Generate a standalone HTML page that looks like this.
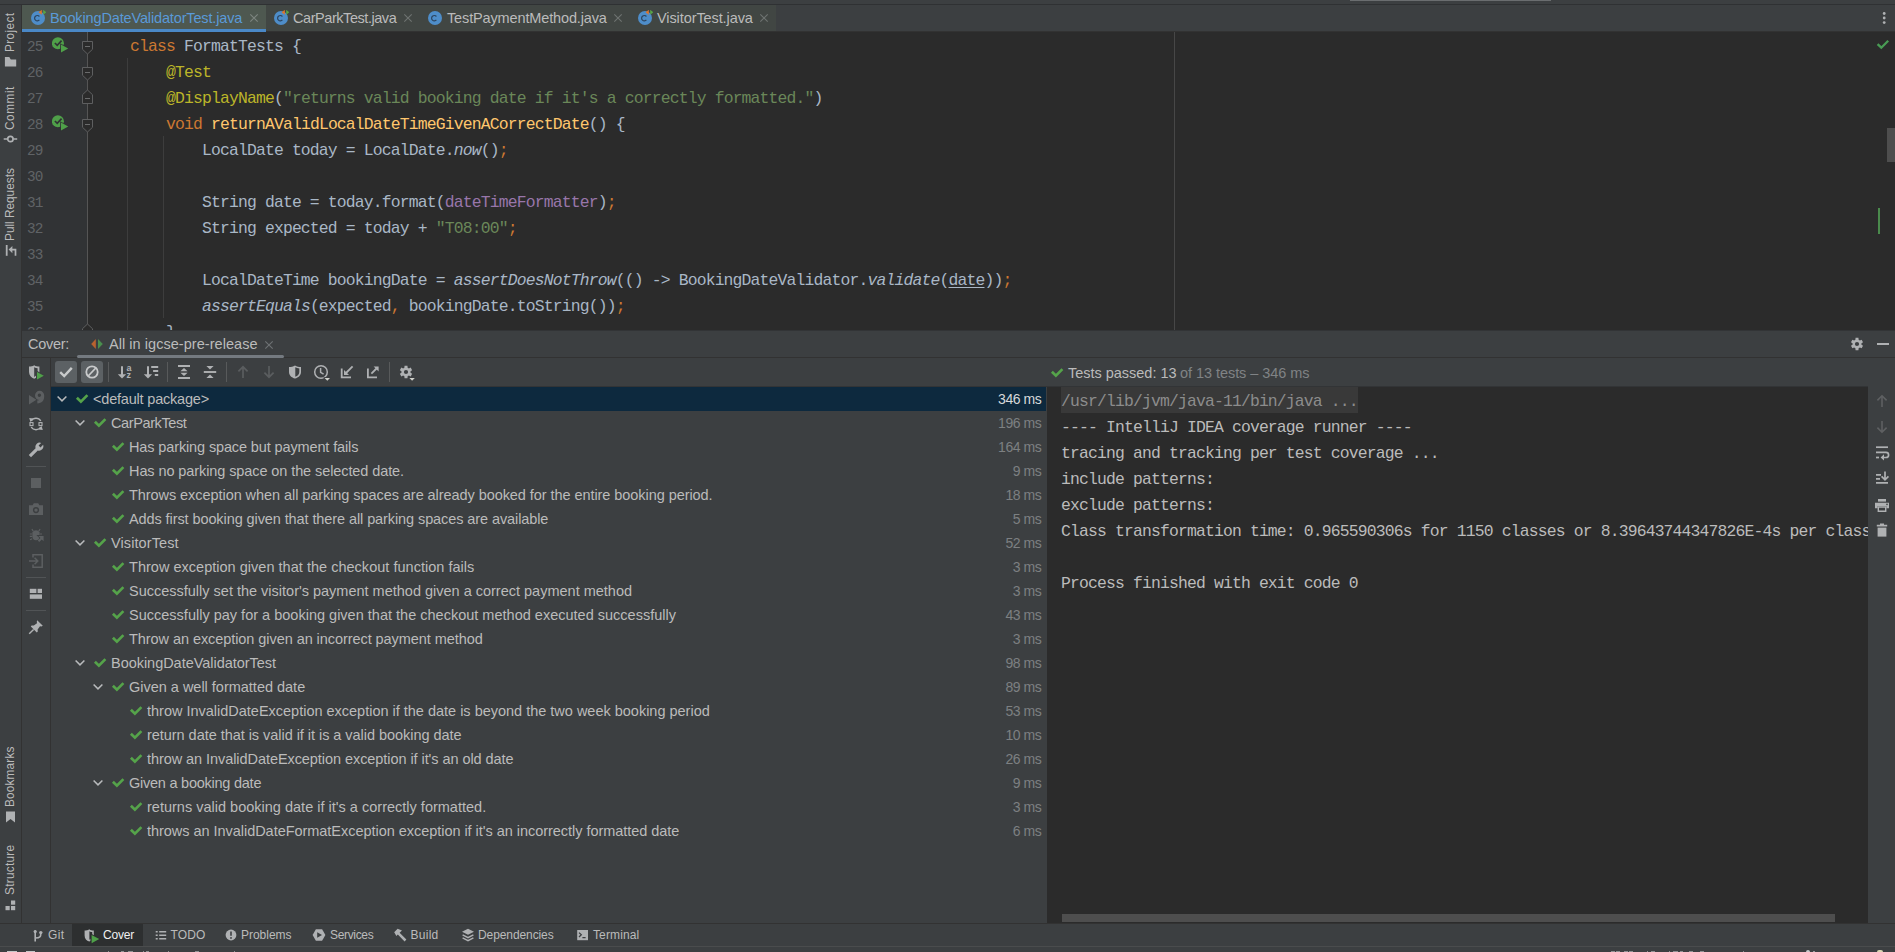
<!DOCTYPE html>
<html><head><meta charset="utf-8"><title>IDE</title>
<style>
html,body{margin:0;padding:0;}
body{width:1895px;height:952px;overflow:hidden;background:#3c3f41;position:relative;
 font-family:"Liberation Sans",sans-serif;font-size:13px;color:#bbbbbb;}
div,span,svg{position:absolute;box-sizing:border-box;}
.t{white-space:pre;font-family:"Liberation Sans",sans-serif;}
.m{white-space:pre;font-family:"Liberation Mono",monospace;}
.code{left:94px;height:26px;line-height:26px;font-size:16.4px;letter-spacing:-0.8416px;color:#a9b7c6;}
.code span,.con span{position:static;}
.k{color:#cc7832}.a{color:#bbb529}.s{color:#6a8759}.f{color:#ffc66d}.p{color:#9876aa}.i{font-style:italic}
.u{text-decoration:underline;text-underline-offset:2px}
.ln{left:22px;width:20.6px;text-align:right;height:26px;line-height:26px;font-size:14.4px;letter-spacing:-0.84px;color:#606366;}
.con{left:1061px;height:26px;line-height:26px;font-size:16.4px;letter-spacing:-0.8416px;color:#bbbbbb;}
.vt{white-space:pre;font-family:"Liberation Sans",sans-serif;font-size:11.9px;color:#bbbbbb;transform-origin:0 0;transform:rotate(-90deg);height:14px;line-height:14px;}
</style></head><body>

<div style="left:0;top:0;width:1895px;height:4px;background:#3c3f41"></div>
<div style="left:1350px;top:0;width:201px;height:1px;background:#6a6d6f"></div>
<div style="left:0;top:4px;width:1895px;height:1px;background:#2f3133"></div>
<div style="left:22px;top:5px;width:1873px;height:26px;background:#3c3f41"></div>
<div style="left:22px;top:31px;width:1873px;height:1px;background:#323232"></div>
<div style="left:266px;top:5px;width:510px;height:26px;background:#414643"></div>
<div style="left:22px;top:5px;width:244px;height:24px;background:#4e5850"></div>
<div style="left:22px;top:29px;width:244px;height:3px;background:#4a88c7"></div>
<svg style="left:30px;top:10px" width="16" height="16" viewBox="0 0 16 16"><circle cx="8" cy="8" r="7" fill="#4e8dc9"/><path d="M9.4 9.9 A2.7 2.7 0 1 1 9.4 6.5" fill="none" stroke="#2c4560" stroke-width="1.2"/><path d="M8.6 2.3 L11.8 -0.2 L11.8 4.8 Z" fill="#e0752b"/><path d="M13.2 -0.2 L16.4 2.3 L13.2 4.8 Z" fill="#58a647"/></svg>
<span class="t" style="left:50px;top:6px;height:24px;line-height:24px;font-size:14.5px;color:#5a9ad8;letter-spacing:-0.142px;">BookingDateValidatorTest.java</span>
<svg style="left:249px;top:13px" width="10" height="10" viewBox="0 0 10 10"><path d="M1.3 1.3 L8.7 8.7 M8.7 1.3 L1.3 8.7" stroke="#7d8580" stroke-width="1.1" fill="none"/></svg>
<svg style="left:273px;top:10px" width="16" height="16" viewBox="0 0 16 16"><circle cx="8" cy="8" r="7" fill="#4e8dc9"/><path d="M9.4 9.9 A2.7 2.7 0 1 1 9.4 6.5" fill="none" stroke="#2c4560" stroke-width="1.2"/><path d="M8.6 2.3 L11.8 -0.2 L11.8 4.8 Z" fill="#e0752b"/><path d="M13.2 -0.2 L16.4 2.3 L13.2 4.8 Z" fill="#58a647"/></svg>
<span class="t" style="left:293px;top:6px;height:24px;line-height:24px;font-size:14.5px;color:#bbbbbb;letter-spacing:-0.444px;">CarParkTest.java</span>
<svg style="left:403px;top:13px" width="10" height="10" viewBox="0 0 10 10"><path d="M1.3 1.3 L8.7 8.7 M8.7 1.3 L1.3 8.7" stroke="#6e7371" stroke-width="1.1" fill="none"/></svg>
<svg style="left:426.5px;top:10px" width="16" height="16" viewBox="0 0 16 16"><circle cx="8" cy="8" r="7" fill="#4e8dc9"/><path d="M9.4 9.9 A2.7 2.7 0 1 1 9.4 6.5" fill="none" stroke="#2c4560" stroke-width="1.2"/></svg>
<span class="t" style="left:447px;top:6px;height:24px;line-height:24px;font-size:14.5px;color:#bbbbbb;letter-spacing:-0.137px;">TestPaymentMethod.java</span>
<svg style="left:613px;top:13px" width="10" height="10" viewBox="0 0 10 10"><path d="M1.3 1.3 L8.7 8.7 M8.7 1.3 L1.3 8.7" stroke="#6e7371" stroke-width="1.1" fill="none"/></svg>
<svg style="left:637px;top:10px" width="16" height="16" viewBox="0 0 16 16"><circle cx="8" cy="8" r="7" fill="#4e8dc9"/><path d="M9.4 9.9 A2.7 2.7 0 1 1 9.4 6.5" fill="none" stroke="#2c4560" stroke-width="1.2"/><path d="M8.6 2.3 L11.8 -0.2 L11.8 4.8 Z" fill="#e0752b"/><path d="M13.2 -0.2 L16.4 2.3 L13.2 4.8 Z" fill="#58a647"/></svg>
<span class="t" style="left:657px;top:6px;height:24px;line-height:24px;font-size:14.5px;color:#bbbbbb;letter-spacing:-0.091px;">VisitorTest.java</span>
<svg style="left:759px;top:13px" width="10" height="10" viewBox="0 0 10 10"><path d="M1.3 1.3 L8.7 8.7 M8.7 1.3 L1.3 8.7" stroke="#6e7371" stroke-width="1.1" fill="none"/></svg>
<svg style="left:1882px;top:11px" width="5" height="14" viewBox="0 0 5 14"><circle cx="2.2" cy="2.5" r="1.4" fill="#afb1b3"/><circle cx="2.2" cy="7" r="1.4" fill="#afb1b3"/><circle cx="2.2" cy="11.6" r="1.4" fill="#afb1b3"/></svg>
<div style="left:0;top:5px;width:21px;height:942px;background:#3c3f41"></div>
<div style="left:21px;top:5px;width:1px;height:918px;background:#323232"></div>
<span class="vt" style="left:2.7px;top:52px;letter-spacing:0.356px">Project</span>
<svg style="left:4px;top:55.6px" width="14" height="12" viewBox="0 0 14 12"><path d="M0.9 1 H5.3 L6.8 3.4 H12.2 V10.6 H0.9 Z" fill="#afb1b3"/></svg>
<span class="vt" style="left:2.7px;top:129.6px;letter-spacing:0.472px">Commit</span>
<svg style="left:3px;top:131.7px" width="15" height="14" viewBox="0 0 15 14"><circle cx="7.4" cy="7" r="2.7" fill="none" stroke="#afb1b3" stroke-width="1.7"/><path d="M0.7 7 H4.4 M10.4 7 H14.2" stroke="#afb1b3" stroke-width="1.7"/></svg>
<span class="vt" style="left:2.7px;top:240.5px;letter-spacing:-0.044px">Pull Requests</span>
<svg style="left:4px;top:244px" width="14" height="13" viewBox="0 0 14 13"><path d="M2.7 1 V11.8" stroke="#afb1b3" stroke-width="1.8"/><path d="M11.5 11.8 V5.6 H7" stroke="#afb1b3" stroke-width="1.7" fill="none"/><path d="M4.6 5.6 L8.4 2 V9.2 Z" fill="#afb1b3"/></svg>
<span class="vt" style="left:2.7px;top:807px;letter-spacing:0.114px">Bookmarks</span>
<svg style="left:5px;top:811px" width="11" height="12" viewBox="0 0 11 12"><path d="M1 0.5 H10 V11.5 L5.5 8 L1 11.5 Z" fill="#afb1b3"/></svg>
<span class="vt" style="left:2.7px;top:895px;letter-spacing:0.228px">Structure</span>
<svg style="left:5px;top:900px" width="11" height="11" viewBox="0 0 11 11"><rect x="6" y="0.5" width="4.2" height="4.2" fill="#afb1b3"/><rect x="0.5" y="6" width="4.2" height="4.2" fill="#afb1b3"/><rect x="6" y="6" width="4.2" height="4.2" fill="#afb1b3"/></svg>
<div style="left:22px;top:32px;width:1873px;height:298px;background:#2b2b2b;overflow:hidden">
<div style="left:0;top:0;width:65px;height:298px;background:#313335"></div>
<div style="left:65px;top:0;width:1px;height:298px;background:#555555"></div>
<div style="left:1152px;top:0;width:1px;height:298px;background:#474747"></div>
<div style="left:105px;top:26px;width:1px;height:272px;background:#3d3d3d"></div>
<div style="left:141px;top:104px;width:1px;height:182px;background:#3d3d3d"></div>
</div>
<div style="left:0;top:32px;width:1895px;height:298px;overflow:hidden">
<span class="m ln" style="top:2px">25</span>
<span class="m ln" style="top:28px">26</span>
<span class="m ln" style="top:54px">27</span>
<span class="m ln" style="top:80px">28</span>
<span class="m ln" style="top:106px">29</span>
<span class="m ln" style="top:132px">30</span>
<span class="m ln" style="top:158px">31</span>
<span class="m ln" style="top:184px">32</span>
<span class="m ln" style="top:210px">33</span>
<span class="m ln" style="top:236px">34</span>
<span class="m ln" style="top:262px">35</span>
<span class="m ln" style="top:288px">36</span>
<span class="m code" style="top:2px">    <span class="k">class </span>FormatTests {</span>
<span class="m code" style="top:28px">        <span class="a">@Test</span></span>
<span class="m code" style="top:54px">        <span class="a">@DisplayName</span>(<span class="s">"returns valid booking date if it's a correctly formatted."</span>)</span>
<span class="m code" style="top:80px">        <span class="k">void </span><span class="f">returnAValidLocalDateTimeGivenACorrectDate</span>() {</span>
<span class="m code" style="top:106px">            LocalDate today = LocalDate.<span class="i">now</span>()<span class="k">;</span></span>
<span class="m code" style="top:158px">            String date = today.format(<span class="p">dateTimeFormatter</span>)<span class="k">;</span></span>
<span class="m code" style="top:184px">            String expected = today + <span class="s">"T08:00"</span><span class="k">;</span></span>
<span class="m code" style="top:236px">            LocalDateTime bookingDate = <span class="i">assertDoesNotThrow</span>(() -&gt; BookingDateValidator.<span class="i">validate</span>(<span class="u">date</span>))<span class="k">;</span></span>
<span class="m code" style="top:262px">            <span class="i">assertEquals</span>(expected<span class="k">,</span> bookingDate.toString())<span class="k">;</span></span>
<span class="m code" style="top:288px">        }</span>
</div>
<div style="left:22px;top:32px;width:200px;height:298px;overflow:hidden">
<svg style="left:30px;top:5px" width="17" height="17" viewBox="0 0 17 17"><circle cx="5.9" cy="6.3" r="6" fill="#4fa049"/><path d="M2.9 6 L5.2 8.3 L9.6 3.6" stroke="#313335" stroke-width="1.7" fill="none"/><path d="M8.2 6.3 L8.2 16.8 L17.6 11.6 Z" fill="#313335"/><path d="M9 7.6 L9 15.6 L16.2 11.6 Z" fill="#4fa049"/></svg>
<svg style="left:30px;top:83px" width="17" height="17" viewBox="0 0 17 17"><circle cx="5.9" cy="6.3" r="6" fill="#4fa049"/><path d="M2.9 6 L5.2 8.3 L9.6 3.6" stroke="#313335" stroke-width="1.7" fill="none"/><path d="M8.2 6.3 L8.2 16.8 L17.6 11.6 Z" fill="#313335"/><path d="M9 7.6 L9 15.6 L16.2 11.6 Z" fill="#4fa049"/></svg>
<svg style="left:59px;top:0px" width="13" height="26" viewBox="0 0 13 26"><path d="M1.5 9.5 H11.5 V17.3 L6.5 22 L1.5 17.3 Z" fill="#2b2b2b" stroke="#5e5f60" stroke-width="1"/><path d="M4 14.5 H9" stroke="#6a6b6c" stroke-width="1"/></svg>
<svg style="left:59px;top:26px" width="13" height="26" viewBox="0 0 13 26"><path d="M1.5 9.5 H11.5 V17.3 L6.5 22 L1.5 17.3 Z" fill="#2b2b2b" stroke="#5e5f60" stroke-width="1"/><path d="M4 14.5 H9" stroke="#6a6b6c" stroke-width="1"/></svg>
<svg style="left:59px;top:78px" width="13" height="26" viewBox="0 0 13 26"><path d="M1.5 9.5 H11.5 V17.3 L6.5 22 L1.5 17.3 Z" fill="#2b2b2b" stroke="#5e5f60" stroke-width="1"/><path d="M4 14.5 H9" stroke="#6a6b6c" stroke-width="1"/></svg>
<svg style="left:59px;top:52px" width="13" height="26" viewBox="0 0 13 26"><path d="M1.5 19.5 H11.5 V10.7 L6.5 6 L1.5 10.7 Z" fill="#2b2b2b" stroke="#5e5f60" stroke-width="1"/><path d="M4 14.5 H9" stroke="#6a6b6c" stroke-width="1"/></svg>
<svg style="left:59px;top:286px" width="13" height="26" viewBox="0 0 13 26"><path d="M1.5 19.5 H11.5 V10.7 L6.5 6 L1.5 10.7 Z" fill="#2b2b2b" stroke="#5e5f60" stroke-width="1"/><path d="M4 14.5 H9" stroke="#6a6b6c" stroke-width="1"/></svg>
</div>
<svg style="left:1876px;top:39px" width="14" height="11" viewBox="0 0 14 11"><path d="M1.6 5.2 L5.3 8.7 L12.2 1.8" stroke="#499c54" stroke-width="2.3" fill="none"/></svg>
<div style="left:1887px;top:128px;width:8px;height:34px;background:#4e4e4e"></div>
<div style="left:1878px;top:208px;width:2px;height:26px;background:#4a8a4c"></div>
<div style="left:22px;top:330px;width:1873px;height:593px;background:#3c3f41"></div>
<div style="left:22px;top:357px;width:1873px;height:1px;background:#323232"></div>
<div style="left:22px;top:330px;width:1873px;height:1px;background:#323436"></div>
<span class="t" style="left:28px;top:332px;height:24px;line-height:24px;font-size:14.5px;color:#bbbbbb;letter-spacing:-0.286px;">Cover:</span>
<svg style="left:90px;top:337px" width="14" height="14" viewBox="0 0 14 14"><path d="M5.8 2 V12 L1.2 7 Z" fill="#b9622f"/><path d="M8 2 V12 L12.8 7 Z" fill="#4a8f4e"/></svg>
<span class="t" style="left:109px;top:332px;height:24px;line-height:24px;font-size:14.5px;color:#bbbbbb;letter-spacing:0.047px;">All in igcse-pre-release</span>
<svg style="left:264px;top:339.5px" width="10" height="10" viewBox="0 0 10 10"><path d="M1.3 1.3 L8.7 8.7 M8.7 1.3 L1.3 8.7" stroke="#6e7274" stroke-width="1.1" fill="none"/></svg>
<div style="left:77px;top:355px;width:207px;height:3px;border-radius:1.5px;background:#747a80"></div>
<svg style="left:1848px;top:335px" width="18" height="18" viewBox="0 0 18 18"><path d="M7.40 4.75 L7.56 2.87 L10.44 2.87 L10.60 4.75 L11.88 5.49 L13.59 4.69 L15.03 7.18 L13.48 8.26 L13.48 9.74 L15.03 10.82 L13.59 13.31 L11.88 12.51 L10.60 13.25 L10.44 15.13 L7.56 15.13 L7.40 13.25 L6.12 12.51 L4.41 13.31 L2.97 10.82 L4.52 9.74 L4.52 8.26 L2.97 7.18 L4.41 4.69 L6.12 5.49 Z M6.90 9.00 a2.1 2.1 0 1 0 4.2 0 a2.1 2.1 0 1 0 -4.2 0 Z" fill="#afb1b3" fill-rule="evenodd"/></svg>
<div style="left:1877px;top:343px;width:12px;height:2px;background:#afb1b3"></div>
<div style="left:50px;top:358px;width:1px;height:565px;background:#323232"></div>
<svg style="left:28px;top:364px" width="18" height="18" viewBox="0 0 18 18"><path d="M1 2.6 C3 2.6 4.6 2.2 6.2 1.2 C7.8 2.2 9.4 2.6 11.4 2.6 V8 C11.4 11.4 9 13.6 6.2 14.8 C3.4 13.6 1 11.4 1 8 Z" fill="#afb1b3"/><path d="M6.2 3.2 C7.4 3.9 8.4 4.2 9.6 4.3 V8 C9.6 10.2 8.2 11.8 6.2 12.9 Z" fill="#3c3f41"/><path d="M8 6.2 L8 17 L17.2 11.6 Z" fill="#3c3f41"/><path d="M9 7.9 L9 15.6 L15.8 11.7 Z" fill="#4fa049"/></svg>
<svg style="left:28px;top:390px" width="18" height="16" viewBox="0 0 18 16"><path d="M1 5 L1 14.6 L8.4 9.8 Z" fill="#5c5f61"/><path d="M11.6 0.8 A4.6 4.6 0 1 0 11.6 10 A4.6 4.6 0 1 0 11.6 0.8 Z M11.4 3.6 A1.7 1.7 0 1 1 11.4 7 A1.7 1.7 0 1 1 11.4 3.6 Z" fill="#5c5f61" fill-rule="evenodd"/><path d="M12.8 6 L16.2 6 C16.2 10.8 13.8 13.2 9.4 13.4 L9.2 10.6 C11.8 10.4 12.8 9 12.8 6 Z" fill="#5c5f61"/></svg>
<svg style="left:28px;top:416px" width="16" height="16" viewBox="0 0 16 16"><path d="M3.2 5 A5.6 5.6 0 0 1 12.8 5" stroke="#afb1b3" stroke-width="1.4" fill="none"/><path d="M12.8 11 A5.6 5.6 0 0 1 3.2 11" stroke="#afb1b3" stroke-width="1.4" fill="none"/><path d="M1.2 2 L5.4 2.6 L2.4 6 Z" fill="#afb1b3"/><path d="M14.8 14 L10.6 13.4 L13.6 10 Z" fill="#afb1b3"/><rect x="2" y="6.6" width="3" height="3" fill="none" stroke="#afb1b3" stroke-width="1.1"/><rect x="11" y="6.6" width="3" height="3" fill="none" stroke="#afb1b3" stroke-width="1.1"/></svg>
<svg style="left:28px;top:442px" width="16" height="16" viewBox="0 0 16 16"><path d="M0.8 13 L7.6 6.2 A4.3 4.3 0 0 1 13.2 0.9 L10.6 3.5 L12.5 5.4 L15.1 2.8 A4.3 4.3 0 0 1 9.8 8.4 L3 15.2 Z" fill="#afb1b3"/></svg>
<div style="left:26px;top:466px;width:20px;height:1px;background:#515456"></div>
<div style="left:31px;top:478px;width:10px;height:10px;background:#5c5f61"></div>
<svg style="left:28px;top:502px" width="16" height="14" viewBox="0 0 16 14"><path d="M1 3.2 H4.6 L5.8 1.2 H10.2 L11.4 3.2 H15 V13 H1 Z M8 5 A3.1 3.1 0 1 0 8 11.2 A3.1 3.1 0 1 0 8 5 Z" fill="#5c5f61" fill-rule="evenodd"/><circle cx="8" cy="8.1" r="1.7" fill="#5c5f61"/></svg>
<svg style="left:29px;top:527px" width="16" height="16" viewBox="0 0 16 16"><path d="M3.4 5.6 A4 4 0 0 1 10.6 5.6 V9.6 A3.6 3.6 0 0 1 3.4 9.6 Z" fill="#5c5f61"/><path d="M4.3 4.2 L2.9 2 M9.7 4.2 L11.1 2 M3.2 7 H0.8 M3.2 9.4 H0.8 M3.2 11.8 L1 12.8 M10.8 7 H13" stroke="#5c5f61" stroke-width="1.2"/><path d="M7.4 8 H14.8 V15.4 Z" fill="#3c3f41"/><path d="M9.4 9 H14.6 V14.2 L12.8 12.4 L10.2 15 L8.8 13.6 L11.4 11 Z" fill="#5c5f61"/></svg>
<svg style="left:28px;top:553px" width="16" height="16" viewBox="0 0 16 16"><path d="M5 4.6 V1.8 H14.2 V14.2 H5 V11.4" stroke="#5c5f61" stroke-width="1.5" fill="none"/><path d="M1 8 H9.6 M6.6 4.8 L9.8 8 L6.6 11.2" stroke="#5c5f61" stroke-width="1.5" fill="none"/></svg>
<div style="left:26px;top:577px;width:20px;height:1px;background:#515456"></div>
<svg style="left:29px;top:588px" width="14" height="12" viewBox="0 0 14 12"><rect x="0.8" y="0.8" width="6.6" height="4.2" fill="#afb1b3"/><rect x="8.6" y="0.8" width="4.4" height="4.2" fill="#afb1b3"/><rect x="0.8" y="6.4" width="12.2" height="4.4" fill="#afb1b3"/></svg>
<div style="left:26px;top:610px;width:20px;height:1px;background:#515456"></div>
<svg style="left:28px;top:619px" width="16" height="16" viewBox="0 0 16 16"><path d="M9.2 1.2 L14.8 6.8 L13.4 7.4 L12 7.2 L9.6 10.4 L9.8 12.6 L8.8 13.4 L2.8 7.4 L3.6 6.4 L5.8 6.6 L9 4.2 L8.8 2.6 Z" fill="#afb1b3"/><path d="M5.6 10.4 L1.2 14.8" stroke="#afb1b3" stroke-width="1.4"/></svg>
<div style="left:55px;top:361px;width:22px;height:22px;border-radius:3px;background:#5c6164"></div>
<div style="left:81px;top:361px;width:22px;height:22px;border-radius:3px;background:#5c6164"></div>
<div style="left:108px;top:362px;width:1px;height:20px;background:#585a5b"></div>
<div style="left:167px;top:362px;width:1px;height:20px;background:#585a5b"></div>
<div style="left:226px;top:362px;width:1px;height:20px;background:#585a5b"></div>
<div style="left:389px;top:362px;width:1px;height:20px;background:#585a5b"></div>
<svg style="left:57px;top:363px" width="18" height="18" viewBox="0 0 18 18"><path d="M3.2 9.2 L7.2 13 L14.8 4.9" stroke="#c8cacb" stroke-width="2.4" fill="none"/></svg>
<svg style="left:83px;top:363px" width="18" height="18" viewBox="0 0 18 18"><circle cx="9" cy="9" r="5.7" stroke="#c8cacb" stroke-width="1.8" fill="none"/><path d="M5.2 13 L12.8 5" stroke="#c8cacb" stroke-width="1.8"/></svg>
<svg style="left:116px;top:363px" width="18" height="18" viewBox="0 0 18 18"><path d="M6 3.2 V13" stroke="#afb1b3" stroke-width="2"/><path d="M1.8 11.2 H10.2 L6 15.4 Z" fill="#afb1b3"/><text x="10.4" y="8" font-family="Liberation Sans" font-weight="bold" font-size="9" fill="#afb1b3">a</text><text x="10.6" y="15.4" font-family="Liberation Sans" font-weight="bold" font-size="9" fill="#afb1b3">z</text></svg>
<svg style="left:142px;top:363px" width="18" height="18" viewBox="0 0 18 18"><path d="M6 3.2 V13" stroke="#afb1b3" stroke-width="2"/><path d="M1.8 11.2 H10.2 L6 15.4 Z" fill="#afb1b3"/><path d="M9.2 4 H16.2 M11.1 8 H16.2 M12.8 12 H16.2" stroke="#afb1b3" stroke-width="1.9"/></svg>
<svg style="left:175px;top:363px" width="18" height="18" viewBox="0 0 18 18"><path d="M3 3 H15 M3 15 H15" stroke="#afb1b3" stroke-width="1.9"/><path d="M9 4.9 L12.6 8.3 H5.4 Z M9 13.1 L12.6 9.7 H5.4 Z" fill="#afb1b3"/></svg>
<svg style="left:201px;top:363px" width="18" height="18" viewBox="0 0 18 18"><path d="M2.8 9 H15.2" stroke="#afb1b3" stroke-width="1.9"/><path d="M9 6.4 L12.6 2.9 H5.4 Z M9 11.6 L12.6 15.1 H5.4 Z" fill="#afb1b3"/></svg>
<svg style="left:234px;top:363px" width="18" height="18" viewBox="0 0 18 18"><path d="M9 15 V4 M4.4 8.4 L9 3.8 L13.6 8.4" stroke="#5a5d5f" stroke-width="1.7" fill="none"/></svg>
<svg style="left:260px;top:363px" width="18" height="18" viewBox="0 0 18 18"><path d="M9 3 V14 M4.4 9.6 L9 14.2 L13.6 9.6" stroke="#5a5d5f" stroke-width="1.7" fill="none"/></svg>
<svg style="left:286px;top:363px" width="18" height="18" viewBox="0 0 18 18"><path d="M3 4 C5.2 4 7 3.6 9 2.4 C11 3.6 12.8 4 15 4 V9 C15 12.4 12.4 14.6 9 15.6 C5.6 14.6 3 12.4 3 9 Z" fill="#afb1b3"/><path d="M9.3 4.3 C10.6 5 11.8 5.3 13.3 5.4 V9 C13.3 11.2 11.7 12.9 9.3 13.8 Z" fill="#3c3f41"/></svg>
<svg style="left:312px;top:363px" width="20" height="19" viewBox="0 0 20 19"><circle cx="9" cy="9" r="6.3" stroke="#afb1b3" stroke-width="1.5" fill="none"/><path d="M8.6 5 V9.4 L11.6 11.2" stroke="#afb1b3" stroke-width="1.5" fill="none"/><path d="M11.6 14.2 H19 V18 H11.6 Z" fill="#3c3f41"/><path d="M12.6 15 H18 L15.3 17.7 Z" fill="#d0d2cc"/></svg>
<svg style="left:338px;top:363px" width="18" height="18" viewBox="0 0 18 18"><path d="M3.7 5.4 V14.3 H13" stroke="#afb1b3" stroke-width="1.8" fill="none"/><path d="M14.6 3.4 L8 10" stroke="#afb1b3" stroke-width="1.8"/><path d="M6 7 V12 H11 Z" fill="#afb1b3"/></svg>
<svg style="left:364px;top:363px" width="18" height="18" viewBox="0 0 18 18"><path d="M3.9 5.4 V14.3 H13" stroke="#afb1b3" stroke-width="1.8" fill="none"/><path d="M7.4 10.6 L13 5" stroke="#afb1b3" stroke-width="1.8"/><path d="M9.6 3.4 H14.6 V8.4 Z" fill="#afb1b3"/></svg>
<svg style="left:397px;top:363px" width="22" height="19" viewBox="0 0 22 19"><path d="M7.38 4.69 L7.54 2.77 L10.46 2.77 L10.62 4.69 L11.92 5.44 L13.67 4.62 L15.13 7.15 L13.55 8.25 L13.55 9.75 L15.13 10.85 L13.67 13.38 L11.92 12.56 L10.62 13.31 L10.46 15.23 L7.54 15.23 L7.38 13.31 L6.08 12.56 L4.33 13.38 L2.87 10.85 L4.45 9.75 L4.45 8.25 L2.87 7.15 L4.33 4.62 L6.08 5.44 Z M6.90 9.00 a2.1 2.1 0 1 0 4.2 0 a2.1 2.1 0 1 0 -4.2 0 Z" fill="#afb1b3" fill-rule="evenodd"/><path d="M11.4 14.2 H19 V18 H11.4 Z" fill="#3c3f41"/><path d="M12.4 15 H17.8 L15.1 17.7 Z" fill="#d0d2cc"/></svg>
<div style="left:51px;top:386px;width:1817px;height:1px;background:#323436"></div>
<div style="left:51px;top:387px;width:995px;height:24px;background:#0d293e"></div>
<svg style="left:55.5px;top:394.5px" width="12" height="8" viewBox="0 0 12 8"><path d="M1.6 1.5 L6 5.9 L10.4 1.5" stroke="#b8babc" stroke-width="1.5" fill="none"/></svg>
<svg style="left:75px;top:393px" width="14" height="12" viewBox="0 0 14 12"><path d="M1.9 4.8 L5.9 8.7 L12.4 2.1" stroke="#55a34a" stroke-width="2.7" stroke-linejoin="miter" fill="none"/></svg>
<span class="t" style="left:93px;top:387px;height:24px;line-height:24px;font-size:14.5px;color:#bbbbbb;letter-spacing:-0.196px;">&lt;default package&gt;</span>
<span class="t" style="right:853.7px;top:387px;height:24px;line-height:24px;font-size:14px;letter-spacing:-0.45px;color:#d6d8da">346 ms</span>
<svg style="left:73.5px;top:418.5px" width="12" height="8" viewBox="0 0 12 8"><path d="M1.6 1.5 L6 5.9 L10.4 1.5" stroke="#b8babc" stroke-width="1.5" fill="none"/></svg>
<svg style="left:93px;top:417px" width="14" height="12" viewBox="0 0 14 12"><path d="M1.9 4.8 L5.9 8.7 L12.4 2.1" stroke="#55a34a" stroke-width="2.7" stroke-linejoin="miter" fill="none"/></svg>
<span class="t" style="left:111px;top:411px;height:24px;line-height:24px;font-size:14.5px;color:#bbbbbb;letter-spacing:-0.389px;">CarParkTest</span>
<span class="t" style="right:853.7px;top:411px;height:24px;line-height:24px;font-size:14px;letter-spacing:-0.45px;color:#7d8082">196 ms</span>
<svg style="left:111px;top:441px" width="14" height="12" viewBox="0 0 14 12"><path d="M1.9 4.8 L5.9 8.7 L12.4 2.1" stroke="#55a34a" stroke-width="2.7" stroke-linejoin="miter" fill="none"/></svg>
<span class="t" style="left:129px;top:435px;height:24px;line-height:24px;font-size:14.5px;color:#bbbbbb;letter-spacing:-0.127px;">Has parking space but payment fails</span>
<span class="t" style="right:853.7px;top:435px;height:24px;line-height:24px;font-size:14px;letter-spacing:-0.45px;color:#7d8082">164 ms</span>
<svg style="left:111px;top:465px" width="14" height="12" viewBox="0 0 14 12"><path d="M1.9 4.8 L5.9 8.7 L12.4 2.1" stroke="#55a34a" stroke-width="2.7" stroke-linejoin="miter" fill="none"/></svg>
<span class="t" style="left:129px;top:459px;height:24px;line-height:24px;font-size:14.5px;color:#bbbbbb;letter-spacing:-0.093px;">Has no parking space on the selected date.</span>
<span class="t" style="right:853.7px;top:459px;height:24px;line-height:24px;font-size:14px;letter-spacing:-0.45px;color:#7d8082">9 ms</span>
<svg style="left:111px;top:489px" width="14" height="12" viewBox="0 0 14 12"><path d="M1.9 4.8 L5.9 8.7 L12.4 2.1" stroke="#55a34a" stroke-width="2.7" stroke-linejoin="miter" fill="none"/></svg>
<span class="t" style="left:129px;top:483px;height:24px;line-height:24px;font-size:14.5px;color:#bbbbbb;letter-spacing:-0.063px;">Throws exception when all parking spaces are already booked for the entire booking period.</span>
<span class="t" style="right:853.7px;top:483px;height:24px;line-height:24px;font-size:14px;letter-spacing:-0.45px;color:#7d8082">18 ms</span>
<svg style="left:111px;top:513px" width="14" height="12" viewBox="0 0 14 12"><path d="M1.9 4.8 L5.9 8.7 L12.4 2.1" stroke="#55a34a" stroke-width="2.7" stroke-linejoin="miter" fill="none"/></svg>
<span class="t" style="left:129px;top:507px;height:24px;line-height:24px;font-size:14.5px;color:#bbbbbb;letter-spacing:-0.092px;">Adds first booking given that there all parking spaces are available</span>
<span class="t" style="right:853.7px;top:507px;height:24px;line-height:24px;font-size:14px;letter-spacing:-0.45px;color:#7d8082">5 ms</span>
<svg style="left:73.5px;top:538.5px" width="12" height="8" viewBox="0 0 12 8"><path d="M1.6 1.5 L6 5.9 L10.4 1.5" stroke="#b8babc" stroke-width="1.5" fill="none"/></svg>
<svg style="left:93px;top:537px" width="14" height="12" viewBox="0 0 14 12"><path d="M1.9 4.8 L5.9 8.7 L12.4 2.1" stroke="#55a34a" stroke-width="2.7" stroke-linejoin="miter" fill="none"/></svg>
<span class="t" style="left:111px;top:531px;height:24px;line-height:24px;font-size:14.5px;color:#bbbbbb;letter-spacing:0.098px;">VisitorTest</span>
<span class="t" style="right:853.7px;top:531px;height:24px;line-height:24px;font-size:14px;letter-spacing:-0.45px;color:#7d8082">52 ms</span>
<svg style="left:111px;top:561px" width="14" height="12" viewBox="0 0 14 12"><path d="M1.9 4.8 L5.9 8.7 L12.4 2.1" stroke="#55a34a" stroke-width="2.7" stroke-linejoin="miter" fill="none"/></svg>
<span class="t" style="left:129px;top:555px;height:24px;line-height:24px;font-size:14.5px;color:#bbbbbb;letter-spacing:0.021px;">Throw exception given that the checkout function fails</span>
<span class="t" style="right:853.7px;top:555px;height:24px;line-height:24px;font-size:14px;letter-spacing:-0.45px;color:#7d8082">3 ms</span>
<svg style="left:111px;top:585px" width="14" height="12" viewBox="0 0 14 12"><path d="M1.9 4.8 L5.9 8.7 L12.4 2.1" stroke="#55a34a" stroke-width="2.7" stroke-linejoin="miter" fill="none"/></svg>
<span class="t" style="left:129px;top:579px;height:24px;line-height:24px;font-size:14.5px;color:#bbbbbb;letter-spacing:-0.003px;">Successfully set the visitor's payment method given a correct payment method</span>
<span class="t" style="right:853.7px;top:579px;height:24px;line-height:24px;font-size:14px;letter-spacing:-0.45px;color:#7d8082">3 ms</span>
<svg style="left:111px;top:609px" width="14" height="12" viewBox="0 0 14 12"><path d="M1.9 4.8 L5.9 8.7 L12.4 2.1" stroke="#55a34a" stroke-width="2.7" stroke-linejoin="miter" fill="none"/></svg>
<span class="t" style="left:129px;top:603px;height:24px;line-height:24px;font-size:14.5px;color:#bbbbbb;letter-spacing:0.006px;">Successfully pay for a booking given that the checkout method executed successfully</span>
<span class="t" style="right:853.7px;top:603px;height:24px;line-height:24px;font-size:14px;letter-spacing:-0.45px;color:#7d8082">43 ms</span>
<svg style="left:111px;top:633px" width="14" height="12" viewBox="0 0 14 12"><path d="M1.9 4.8 L5.9 8.7 L12.4 2.1" stroke="#55a34a" stroke-width="2.7" stroke-linejoin="miter" fill="none"/></svg>
<span class="t" style="left:129px;top:627px;height:24px;line-height:24px;font-size:14.5px;color:#bbbbbb;letter-spacing:-0.065px;">Throw an exception given an incorrect payment method</span>
<span class="t" style="right:853.7px;top:627px;height:24px;line-height:24px;font-size:14px;letter-spacing:-0.45px;color:#7d8082">3 ms</span>
<svg style="left:73.5px;top:658.5px" width="12" height="8" viewBox="0 0 12 8"><path d="M1.6 1.5 L6 5.9 L10.4 1.5" stroke="#b8babc" stroke-width="1.5" fill="none"/></svg>
<svg style="left:93px;top:657px" width="14" height="12" viewBox="0 0 14 12"><path d="M1.9 4.8 L5.9 8.7 L12.4 2.1" stroke="#55a34a" stroke-width="2.7" stroke-linejoin="miter" fill="none"/></svg>
<span class="t" style="left:111px;top:651px;height:24px;line-height:24px;font-size:14.5px;color:#bbbbbb;letter-spacing:-0.032px;">BookingDateValidatorTest</span>
<span class="t" style="right:853.7px;top:651px;height:24px;line-height:24px;font-size:14px;letter-spacing:-0.45px;color:#7d8082">98 ms</span>
<svg style="left:91.5px;top:682.5px" width="12" height="8" viewBox="0 0 12 8"><path d="M1.6 1.5 L6 5.9 L10.4 1.5" stroke="#b8babc" stroke-width="1.5" fill="none"/></svg>
<svg style="left:111px;top:681px" width="14" height="12" viewBox="0 0 14 12"><path d="M1.9 4.8 L5.9 8.7 L12.4 2.1" stroke="#55a34a" stroke-width="2.7" stroke-linejoin="miter" fill="none"/></svg>
<span class="t" style="left:129px;top:675px;height:24px;line-height:24px;font-size:14.5px;color:#bbbbbb;letter-spacing:-0.012px;">Given a well formatted date</span>
<span class="t" style="right:853.7px;top:675px;height:24px;line-height:24px;font-size:14px;letter-spacing:-0.45px;color:#7d8082">89 ms</span>
<svg style="left:129px;top:705px" width="14" height="12" viewBox="0 0 14 12"><path d="M1.9 4.8 L5.9 8.7 L12.4 2.1" stroke="#55a34a" stroke-width="2.7" stroke-linejoin="miter" fill="none"/></svg>
<span class="t" style="left:147px;top:699px;height:24px;line-height:24px;font-size:14.5px;color:#bbbbbb;letter-spacing:-0.008px;">throw InvalidDateException exception if the date is beyond the two week booking period</span>
<span class="t" style="right:853.7px;top:699px;height:24px;line-height:24px;font-size:14px;letter-spacing:-0.45px;color:#7d8082">53 ms</span>
<svg style="left:129px;top:729px" width="14" height="12" viewBox="0 0 14 12"><path d="M1.9 4.8 L5.9 8.7 L12.4 2.1" stroke="#55a34a" stroke-width="2.7" stroke-linejoin="miter" fill="none"/></svg>
<span class="t" style="left:147px;top:723px;height:24px;line-height:24px;font-size:14.5px;color:#bbbbbb;letter-spacing:-0.041px;">return date that is valid if it is a valid booking date</span>
<span class="t" style="right:853.7px;top:723px;height:24px;line-height:24px;font-size:14px;letter-spacing:-0.45px;color:#7d8082">10 ms</span>
<svg style="left:129px;top:753px" width="14" height="12" viewBox="0 0 14 12"><path d="M1.9 4.8 L5.9 8.7 L12.4 2.1" stroke="#55a34a" stroke-width="2.7" stroke-linejoin="miter" fill="none"/></svg>
<span class="t" style="left:147px;top:747px;height:24px;line-height:24px;font-size:14.5px;color:#bbbbbb;letter-spacing:-0.065px;">throw an InvalidDateException exception if it's an old date</span>
<span class="t" style="right:853.7px;top:747px;height:24px;line-height:24px;font-size:14px;letter-spacing:-0.45px;color:#7d8082">26 ms</span>
<svg style="left:91.5px;top:778.5px" width="12" height="8" viewBox="0 0 12 8"><path d="M1.6 1.5 L6 5.9 L10.4 1.5" stroke="#b8babc" stroke-width="1.5" fill="none"/></svg>
<svg style="left:111px;top:777px" width="14" height="12" viewBox="0 0 14 12"><path d="M1.9 4.8 L5.9 8.7 L12.4 2.1" stroke="#55a34a" stroke-width="2.7" stroke-linejoin="miter" fill="none"/></svg>
<span class="t" style="left:129px;top:771px;height:24px;line-height:24px;font-size:14.5px;color:#bbbbbb;letter-spacing:-0.242px;">Given a booking date</span>
<span class="t" style="right:853.7px;top:771px;height:24px;line-height:24px;font-size:14px;letter-spacing:-0.45px;color:#7d8082">9 ms</span>
<svg style="left:129px;top:801px" width="14" height="12" viewBox="0 0 14 12"><path d="M1.9 4.8 L5.9 8.7 L12.4 2.1" stroke="#55a34a" stroke-width="2.7" stroke-linejoin="miter" fill="none"/></svg>
<span class="t" style="left:147px;top:795px;height:24px;line-height:24px;font-size:14.5px;color:#bbbbbb;letter-spacing:0.006px;">returns valid booking date if it's a correctly formatted.</span>
<span class="t" style="right:853.7px;top:795px;height:24px;line-height:24px;font-size:14px;letter-spacing:-0.45px;color:#7d8082">3 ms</span>
<svg style="left:129px;top:825px" width="14" height="12" viewBox="0 0 14 12"><path d="M1.9 4.8 L5.9 8.7 L12.4 2.1" stroke="#55a34a" stroke-width="2.7" stroke-linejoin="miter" fill="none"/></svg>
<span class="t" style="left:147px;top:819px;height:24px;line-height:24px;font-size:14.5px;color:#bbbbbb;letter-spacing:-0.037px;">throws an InvalidDateFormatException exception if it's an incorrectly formatted date</span>
<span class="t" style="right:853.7px;top:819px;height:24px;line-height:24px;font-size:14px;letter-spacing:-0.45px;color:#7d8082">6 ms</span>
<div style="left:1047px;top:387px;width:821px;height:536px;background:#2b2b2b"></div>
<div style="left:1061px;top:387px;width:297px;height:26px;background:#393939"></div>
<svg style="left:1050px;top:367px" width="14" height="12" viewBox="0 0 14 12"><path d="M1.9 4.8 L5.9 8.7 L12.4 2.1" stroke="#55a34a" stroke-width="2.7" stroke-linejoin="miter" fill="none"/></svg>
<span class="t" style="left:1068px;top:361px;height:24px;line-height:24px;font-size:14.5px;color:#bbbbbb;letter-spacing:-0.020px;">Tests passed: 13</span>
<span class="t" style="left:1180px;top:361px;height:24px;line-height:24px;font-size:14.5px;color:#808385;letter-spacing:-0.054px;">of 13 tests – 346 ms</span>
<div style="left:1047px;top:387px;width:821px;height:536px;overflow:hidden">
<span class="m con" style="left:14px;top:2px"><span style="color:#8c8c8c">/usr/lib/jvm/java-11/bin/java ...</span></span>
<span class="m con" style="left:14px;top:28px">---- IntelliJ IDEA coverage runner ----</span>
<span class="m con" style="left:14px;top:54px">tracing and tracking per test coverage ...</span>
<span class="m con" style="left:14px;top:80px">include patterns:</span>
<span class="m con" style="left:14px;top:106px">exclude patterns:</span>
<span class="m con" style="left:14px;top:132px">Class transformation time: 0.965590306s for 1150 classes or 8.39643744347826E-4s per class</span>
<span class="m con" style="left:14px;top:158px"></span>
<span class="m con" style="left:14px;top:184px">Process finished with exit code 0</span>
</div>
<div style="left:1062px;top:914px;width:773px;height:8px;background:#4e4e4e"></div>
<svg style="left:1874px;top:392px" width="16" height="18" viewBox="0 0 16 18"><path d="M8 15 V4 M3.4 8.4 L8 3.8 L12.6 8.4" stroke="#5e6062" stroke-width="1.6" fill="none"/></svg>
<svg style="left:1874px;top:418px" width="16" height="18" viewBox="0 0 16 18"><path d="M8 3 V14 M3.4 9.6 L8 14.2 L12.6 9.6" stroke="#5e6062" stroke-width="1.6" fill="none"/></svg>
<svg style="left:1874px;top:445px" width="16" height="16" viewBox="0 0 16 16"><path d="M2 2.2 H14" stroke="#afb1b3" stroke-width="1.7" fill="none"/><path d="M2 7.3 H12 A2.6 2.6 0 0 1 12 12.5 H8.6" stroke="#afb1b3" stroke-width="1.7" fill="none"/><path d="M10 9.3 L6.6 12.5 L10 15.6 Z" fill="#afb1b3"/><path d="M2 12.5 H5" stroke="#afb1b3" stroke-width="1.7"/></svg>
<svg style="left:1874px;top:470px" width="16" height="16" viewBox="0 0 16 16"><path d="M2 4.9 H7 M2 8.9 H6 M2 12.8 H14" stroke="#afb1b3" stroke-width="1.7" fill="none"/><path d="M11 1.5 V9.5 M7.6 6.4 L11 9.9 L14.4 6.4" stroke="#afb1b3" stroke-width="1.7" fill="none"/></svg>
<svg style="left:1874px;top:497px" width="16" height="16" viewBox="0 0 16 16"><path d="M4 2 H12 V4.6 H4 Z" fill="#afb1b3"/><path d="M1 5.8 H15 V11.2 H12.4 V9 H3.6 V11.2 H1 Z" fill="#afb1b3"/><path d="M4.3 10 H11.7 V14.2 H4.3 Z" fill="none" stroke="#afb1b3" stroke-width="1.4"/><circle cx="13" cy="7.4" r="0.8" fill="#3c3f41"/></svg>
<svg style="left:1874px;top:522px" width="16" height="16" viewBox="0 0 16 16"><path d="M6 1.6 H10 V2.8 H13.2 V4.6 H2.8 V2.8 H6 Z" fill="#afb1b3"/><path d="M3.6 5.6 H12.4 V14.6 H3.6 Z" fill="#afb1b3"/></svg>
<div style="left:0;top:923px;width:1895px;height:1px;background:#323232"></div>
<div style="left:0;top:924px;width:1895px;height:22px;background:#3c3f41"></div>
<div style="left:72px;top:924px;width:71px;height:22px;background:#2d2f30"></div>
<div style="left:0;top:946px;width:1895px;height:1px;background:#4a4c4d"></div>
<div style="left:0;top:947px;width:1895px;height:5px;background:#3c3f41"></div>
<span class="t" style="left:48px;top:924px;height:22px;line-height:22px;font-size:12px;color:#bbbbbb;letter-spacing:0.386px;">Git</span>
<span class="t" style="left:103px;top:924px;height:22px;line-height:22px;font-size:12px;color:#f0f0f0;letter-spacing:-0.203px;">Cover</span>
<span class="t" style="left:170.5px;top:924px;height:22px;line-height:22px;font-size:12px;color:#bbbbbb;letter-spacing:0.136px;">TODO</span>
<span class="t" style="left:241px;top:924px;height:22px;line-height:22px;font-size:12px;color:#bbbbbb;letter-spacing:-0.023px;">Problems</span>
<span class="t" style="left:330px;top:924px;height:22px;line-height:22px;font-size:12px;color:#bbbbbb;letter-spacing:-0.341px;">Services</span>
<span class="t" style="left:410.5px;top:924px;height:22px;line-height:22px;font-size:12px;color:#bbbbbb;letter-spacing:0.262px;">Build</span>
<span class="t" style="left:478px;top:924px;height:22px;line-height:22px;font-size:12px;color:#bbbbbb;letter-spacing:-0.094px;">Dependencies</span>
<span class="t" style="left:593px;top:924px;height:22px;line-height:22px;font-size:12px;color:#bbbbbb;letter-spacing:0.118px;">Terminal</span>
<svg style="left:31.5px;top:928.6px" width="12" height="14" viewBox="0 0 12 14"><path d="M3.2 1.5 V12.5 M3.2 9 C8.6 9 8.8 7 8.8 4.4" stroke="#afb1b3" stroke-width="1.6" fill="none"/><circle cx="3.2" cy="2.6" r="1.6" fill="#afb1b3"/><circle cx="8.8" cy="3.6" r="1.7" fill="#afb1b3"/></svg>
<svg style="left:83px;top:927.7px" width="18" height="17" viewBox="0 0 18 17"><path d="M1.6 2.6 C3.4 2.6 4.8 2.2 6.2 1.2 C7.6 2.2 9 2.6 10.8 2.6 V7.4 C10.8 10.6 8.8 12.6 6.2 13.6 C3.6 12.6 1.6 10.6 1.6 7.4 Z" fill="#afb1b3"/><path d="M6.4 3.2 C7.4 3.8 8.2 4 9.2 4.1 V7.4 C9.2 9.4 8 10.8 6.4 11.8 Z" fill="#2d2f30"/><path d="M7.4 5.2 L7.4 16.8 L17.6 11 Z" fill="#2d2f30"/><path d="M8.6 7 L8.6 15.2 L16.2 11.1 Z" fill="#4fa049"/></svg>
<svg style="left:155px;top:929px" width="12" height="12" viewBox="0 0 12 12"><path d="M0.7 2.7 H2.7 M4.2 2.7 H11.2 M0.7 6.2 H2.7 M4.2 6.2 H11.2 M0.7 9.7 H2.7 M4.2 9.7 H11.2" stroke="#afb1b3" stroke-width="1.6"/></svg>
<svg style="left:225px;top:929px" width="12" height="12" viewBox="0 0 12 12"><circle cx="6" cy="6" r="5.4" fill="#afb1b3"/><path d="M6 2.6 V6.8" stroke="#3c3f41" stroke-width="1.6"/><circle cx="6" cy="8.9" r="0.95" fill="#3c3f41"/></svg>
<svg style="left:312px;top:928px" width="14" height="14" viewBox="0 0 14 14"><path d="M0.6 7 L3.9 1.3 H10.1 L13.4 7 L10.1 12.7 H3.9 Z" fill="#afb1b3"/><path d="M5.2 4.2 V9.8 L10 7 Z" fill="#3c3f41"/></svg>
<svg style="left:393px;top:928px" width="14" height="14" viewBox="0 0 14 14"><path d="M1.2 4.2 L4.6 0.8 L9 2.4 L6.6 4.8 L13.4 11.6 L11.6 13.4 L4.8 6.6 L3.4 8 Z" fill="#afb1b3"/></svg>
<svg style="left:460.7px;top:928.3px" width="14" height="14" viewBox="0 0 14 14"><path d="M7 0.8 L13 3.8 L7 6.8 L1 3.8 Z" fill="#afb1b3"/><path d="M1.6 6.9 L7 9.6 L12.4 6.9 M1.6 9.9 L7 12.6 L12.4 9.9" stroke="#afb1b3" stroke-width="1.5" fill="none"/></svg>
<svg style="left:576px;top:929px" width="13" height="12" viewBox="0 0 13 12"><rect x="1.2" y="1" width="10.8" height="10.2" fill="#afb1b3"/><path d="M3 3.6 L5.3 5.8 L3 8 M6.4 8.6 H9.6" stroke="#3c3f41" stroke-width="1.3" fill="none"/></svg>
<div style="left:0;top:947px;width:1895px;height:5px;overflow:hidden">
<div style="left:7px;top:3.5px;width:10px;height:3px;background:#c4c6c7"></div>
<div style="left:26px;top:3.5px;width:8.5px;height:3px;background:#c4c6c7"></div>
<div style="left:108px;top:4px;width:1px;height:2px;background:#8e9092"></div>
<div style="left:120.7px;top:4px;width:3px;height:2px;background:#8e9092"></div>
<div style="left:127.6px;top:4px;width:5px;height:2px;background:#8e9092"></div>
<div style="left:143px;top:4px;width:1px;height:2px;background:#8e9092"></div>
<div style="left:145.5px;top:4px;width:3.3px;height:2px;background:#8e9092"></div>
<div style="left:168.3px;top:4px;width:1px;height:2px;background:#8e9092"></div>
<div style="left:195px;top:4px;width:4px;height:2px;background:#8e9092"></div>
<div style="left:233.6px;top:4px;width:1px;height:2px;background:#8e9092"></div>
<div style="left:1610.5px;top:4px;width:4px;height:2px;background:#8e9092"></div>
<div style="left:1616px;top:4px;width:4px;height:2px;background:#8e9092"></div>
<div style="left:1624px;top:4px;width:4px;height:2px;background:#8e9092"></div>
<div style="left:1629px;top:4px;width:4px;height:2px;background:#8e9092"></div>
<div style="left:1647px;top:4px;width:1px;height:2px;background:#8e9092"></div>
<div style="left:1651px;top:4px;width:4px;height:2px;background:#8e9092"></div>
<div style="left:1669px;top:4px;width:1px;height:2px;background:#8e9092"></div>
<div style="left:1673px;top:4px;width:5px;height:2px;background:#8e9092"></div>
<div style="left:1680px;top:4px;width:3px;height:2px;background:#8e9092"></div>
<div style="left:1689px;top:4px;width:4px;height:2px;background:#8e9092"></div>
<div style="left:1700px;top:4px;width:4px;height:2px;background:#8e9092"></div>
<div style="left:1743px;top:4px;width:1px;height:2px;background:#8e9092"></div>
<div style="left:1806px;top:3px;width:4px;height:4px;border-radius:2px;background:#c8cacb"></div>
<div style="left:1812.5px;top:4px;width:2.5px;height:2px;background:#9a9c9e"></div>
<div style="left:1877px;top:3.4px;width:6px;height:4px;border-radius:2px;background:#d8d4b0"></div>
</div>
</body></html>
